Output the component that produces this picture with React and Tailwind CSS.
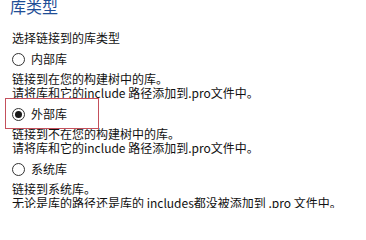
const options = [
  {
    label: "内部库",
    checked: false,
    lines: ["链接到在您的构建树中的库。", "请将库和它的include 路径添加到.pro文件中。"],
  },
  {
    label: "外部库",
    checked: true,
    lines: ["链接到不在您的构建树中的库。", "请将库和它的include 路径添加到.pro文件中。"],
  },
  {
    label: "系统库",
    checked: false,
    lines: ["链接到系统库。", "无论是库的路径还是库的 includes都没被添加到 .pro 文件中。"],
  },
];

function Radio({ checked }) {
  return (
    <span className="flex h-[13px] w-[13px] shrink-0 items-center justify-center rounded-full border border-[#333333] bg-white">
      {checked && <span className="h-[7px] w-[7px] rounded-full bg-[#1a1a1a]" />}
    </span>
  );
}

export default function App() {
  return (
    <div
      className="h-[208px] w-[366px] overflow-hidden bg-white pl-[12px] text-[12px] text-[#111111]"
      style={{ fontFamily: '"Noto Sans CJK SC", "Noto Sans", sans-serif' }}
    >
      <div className="-mt-[2px] -ml-[2px] h-[16px] text-[16px] leading-[16px] text-[#1f4e96]">
        库类型
      </div>
      <div className="mt-[17px] h-[14px] leading-[14px]">选择链接到的库类型</div>

      {options.map((opt) => (
        <div key={opt.label}>
          <div className="relative mt-[4px] flex h-[20px] items-center gap-[6px]">
            {opt.checked && (
              <div className="absolute left-[-7px] top-[-6px] h-[31px] w-[94px] border border-[#c4505c]" />
            )}
            <Radio checked={opt.checked} />
            <span className="leading-[20px]">{opt.label}</span>
          </div>
          <div className="mt-[3px]">
            {opt.lines.map((line) => (
              <div key={line} className="h-[14px] whitespace-nowrap leading-[14px]">
                {line}
              </div>
            ))}
          </div>
        </div>
      ))}
    </div>
  );
}
